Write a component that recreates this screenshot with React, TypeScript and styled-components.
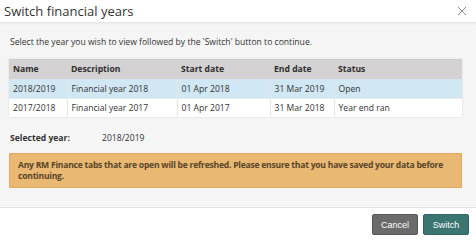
import styled, { createGlobalStyle } from 'styled-components';

const GlobalStyle = createGlobalStyle`
  html, body {
    margin: 0;
    padding: 0;
    background: #ffffff;
  }
  body {
    font-family: "Open Sans", "Noto Sans", sans-serif;
  }
`;

type Year = {
  name: string;
  description: string;
  start: string;
  end: string;
  status: string;
};

const years: Year[] = [
  { name: '2018/2019', description: 'Financial year 2018', start: '01 Apr 2018', end: '31 Mar 2019', status: 'Open' },
  { name: '2017/2018', description: 'Financial year 2017', start: '01 Apr 2017', end: '31 Mar 2018', status: 'Year end ran' },
];

const selected = '2018/2019';

const App = (): JSX.Element => {
  return (
    <>
      <GlobalStyle />
      <Dialog>
        <Header>
          <Title>Switch financial years</Title>
          <Close aria-label="Close">
            <svg width="10" height="10" viewBox="0 0 10 10">
              <path d="M1 1 L9 9 M9 1 L1 9" stroke="#8a8a8a" strokeWidth="1" fill="none" />
            </svg>
          </Close>
        </Header>
        <Body>
          <Intro>Select the year you wish to view followed by the 'Switch' button to continue.</Intro>
          <Table>
            <colgroup>
              <col style={{ width: 58 }} />
              <col style={{ width: 110 }} />
              <col style={{ width: 93 }} />
              <col style={{ width: 64 }} />
              <col />
            </colgroup>
            <thead>
              <tr>
                <Th>Name</Th>
                <Th>Description</Th>
                <Th>Start date</Th>
                <Th>End date</Th>
                <Th>Status</Th>
              </tr>
            </thead>
            <tbody>
              {years.map((y) => (
                <Row key={y.name} $active={y.name === selected}>
                  <Td>{y.name}</Td>
                  <Td>{y.description}</Td>
                  <Td>{y.start}</Td>
                  <Td>{y.end}</Td>
                  <Td>{y.status}</Td>
                </Row>
              ))}
            </tbody>
          </Table>
          <Selected>
            <SelectedLabel>Selected year:</SelectedLabel>
            <span>{selected}</span>
          </Selected>
          <Warning>
            Any RM Finance tabs that are open will be refreshed. Please ensure that you have saved your data before
            continuing.
          </Warning>
        </Body>
        <Footer>
          <Button $variant="cancel">Cancel</Button>
          <Button $variant="primary">Switch</Button>
        </Footer>
      </Dialog>
    </>
  );
};

export default App;

const Dialog = styled.div`
  width: 476px;
  height: 241px;
  display: flex;
  flex-direction: column;
  background: #ffffff;
  color: #333333;
`;

const Header = styled.div`
  height: 22px;
  display: flex;
  align-items: center;
  justify-content: space-between;
  padding: 0 9px 0 4px;
  border-bottom: 1px solid #e6e6e6;
  box-shadow: 0 1px 2px rgba(0, 0, 0, 0.05);
  position: relative;
  z-index: 1;
`;

const Title = styled.div`
  font-size: 13px;
  color: #333333;
`;

const Close = styled.button`
  border: none;
  background: none;
  padding: 0;
  display: flex;
  cursor: pointer;
`;

const Body = styled.div`
  flex: 1;
  background: #f5f5f5;
  padding: 13px 14px 0 9px;
  border-bottom: 1px solid #e3e3e3;
`;

const Intro = styled.div`
  font-size: 8.6px;
  padding-left: 1px;
  margin-bottom: 11px;
`;

const Table = styled.table`
  width: 100%;
  border-collapse: collapse;
  table-layout: fixed;
  font-size: 8.6px;
  box-shadow: 0 0 2px rgba(0, 0, 0, 0.12);
`;

const Th = styled.th`
  background: #d3d1d2;
  text-align: left;
  font-weight: 700;
  height: 20px;
  padding: 0 4px;
  color: #2f2f2f;
`;

const Row = styled.tr<{ $active: boolean }>`
  background: ${(p) => (p.$active ? '#d1e7f4' : '#ffffff')};
  border-top: 1px solid ${(p) => (p.$active ? '#d6e3ea' : '#e3ecf1')};
`;

const Td = styled.td`
  height: 18px;
  padding: 0 4px;
  border-left: 1px solid #e2e6e8;
  &:first-child {
    border-left: none;
  }
  color: #333333;
`;

const Selected = styled.div`
  display: flex;
  font-size: 8.6px;
  margin: 15px 0 0 1px;
`;

const SelectedLabel = styled.span`
  font-weight: 700;
  width: 92px;
`;

const Warning = styled.div`
  margin-top: 9px;
  background: #e9b974;
  border: 1px solid #e1aa5e;
  border-radius: 1px;
  padding: 6px 8px 5px 8px;
  font-size: 8.6px;
  font-weight: 700;
  letter-spacing: -0.25px;
  line-height: 11px;
  color: #584427;
`;

const Footer = styled.div`
  height: 33px;
  display: flex;
  align-items: center;
  justify-content: flex-end;
  gap: 5px;
  padding: 0 7px 0 0;
`;

const Button = styled.button<{ $variant: 'cancel' | 'primary' }>`
  height: 21px;
  width: 46px;
  font-family: "Liberation Sans", Arial, sans-serif;
  font-size: 9px;
  color: #ffffff;
  border-radius: 2px;
  border: 1px solid ${(p) => (p.$variant === 'cancel' ? '#555555' : '#2f6461')};
  background: ${(p) => (p.$variant === 'cancel' ? '#6b6b6b' : '#3a7572')};
  padding: 0;
  cursor: pointer;
`;
